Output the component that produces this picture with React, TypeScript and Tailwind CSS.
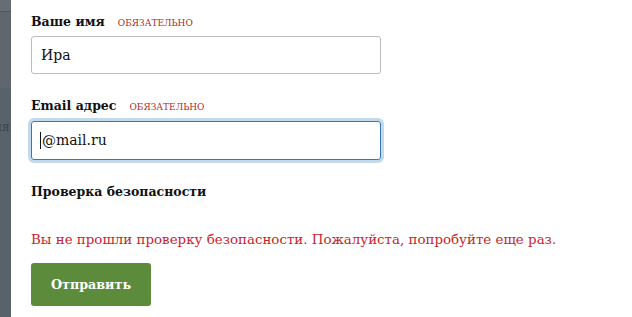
export default function App() {
  return (
    <div className="flex h-[317px] w-[632px] overflow-hidden bg-white" style={{ fontFamily: '"DejaVu Serif", serif' }}>
      {/* backdrop sliver */}
      <div className="flex w-[11px] shrink-0 flex-col bg-[#58626a]">
        <div className="h-[12px] border-b border-[#50585f] bg-[#676d74]" />
        <div className="h-[76px] bg-[#5f666e]" />
        <div className="relative flex-1">
          <span className="absolute left-[-6px] top-[30px] text-[12px] text-[#3e464c]">ия</span>
        </div>
      </div>

      <div className="flex-1 pl-[20px] pt-[12px]">
        <div className="flex items-baseline gap-[13px] leading-[20px]">
          <span className="text-[12.5px] font-bold text-[#111]">Ваше имя</span>
          <span className="text-[9px] text-[#b0282f]">ОБЯЗАТЕЛЬНО</span>
        </div>
        <div className="mt-[3px] flex h-[38px] w-[350px] items-center rounded-[3px] border border-[#bdbdbd] px-[9px] text-[14px] text-[#111]">
          Ира
        </div>

        <div className="mt-[22px] flex items-baseline gap-[13px] leading-[20px]">
          <span className="text-[12.5px] font-bold text-[#111]">Email адрес</span>
          <span className="text-[9px] text-[#b0282f]">ОБЯЗАТЕЛЬНО</span>
        </div>
        <div className="mt-[4px] flex h-[39px] w-[350px] items-center rounded-[3px] border border-[#3a78b5] px-[8px] text-[14px] text-[#111] ring-[3px] ring-[#c3d9ec]">
          <span className="mr-[1px] h-[17px] w-px bg-[#111]" />
          @mail.ru
        </div>

        <div className="mt-[22px] text-[12.5px] font-bold leading-[20px] text-[#111]">Проверка безопасности</div>

        <div className="mt-[28px] text-[13.4px] leading-[20px] text-[#c8242b]">
          Вы не прошли проверку безопасности. Пожалуйста, попробуйте еще раз.
        </div>

        <button className="mt-[13px] h-[43px] w-[120px] rounded-[3px] bg-[#5c8c3b] text-[12.7px] font-bold text-white">
          Отправить
        </button>
      </div>
    </div>
  )
}
